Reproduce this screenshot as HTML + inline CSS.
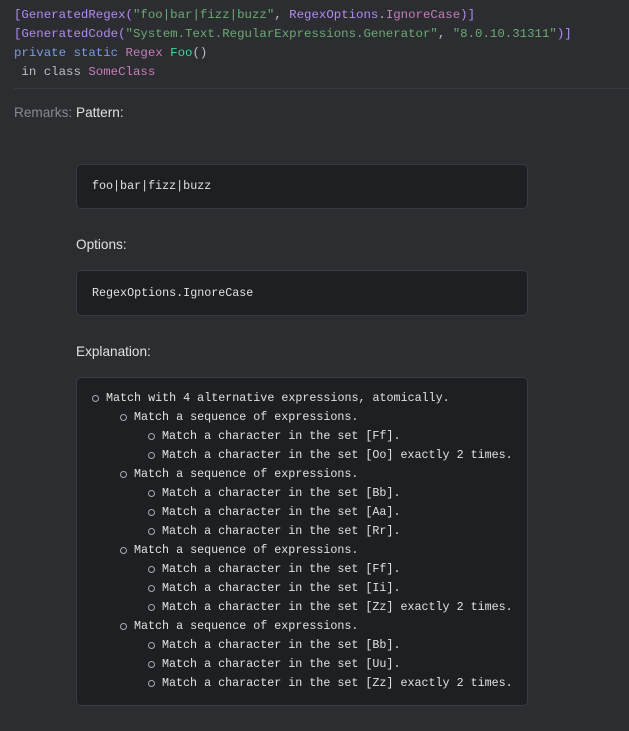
<!DOCTYPE html>
<html><head><style>
body{margin:0;background:#2b2d30;width:629px;height:731px;overflow:hidden;font-family:"Liberation Sans",sans-serif;color:#dfe1e5}
.code{position:absolute;left:14px;top:6px;font-family:"Liberation Mono",monospace;font-size:12.4px;line-height:19px;white-space:pre;color:#bcbec4}
.s{color:#6aab73}.k{color:#7a9be0}.c{color:#c77dbb}.g{color:#4ec9a0}.an{color:#b18cf2}
hr{position:absolute;left:14px;right:0;top:88px;margin:0;border:0;border-top:1px solid #393b40}
.lbl{position:absolute;font-size:13.6px;color:#dfe1e5}
.box{position:absolute;left:76px;width:450px;background:#1e1f22;border:1px solid #393b40;border-radius:5px;font-family:"Liberation Mono",monospace;font-size:11.7px;color:#dfe1e5;white-space:pre}
.ln{position:absolute;height:19px;line-height:19px}
.ln:before{content:"";position:absolute;left:-14px;top:6px;width:5px;height:5px;border:1px solid #a8aab0;border-radius:50%}
</style></head><body>
<div class="code"><span class="an">[GeneratedRegex(</span><span class="s">"foo|bar|fizz|buzz"</span>, <span class="an">RegexOptions</span>.<span class="c">IgnoreCase</span><span class="an">)]</span>
<span class="an">[GeneratedCode(</span><span class="s">"System.Text.RegularExpressions.Generator"</span>, <span class="s">"8.0.10.31311"</span><span class="an">)]</span>
<span class="k">private static</span> <span class="c">Regex</span> <span class="g">Foo</span>()
 in class <span class="c">SomeClass</span></div>
<hr>
<div class="lbl" style="left:14px;top:105px;color:#868a91">Remarks:</div>
<div class="lbl" style="left:76px;top:105px">Pattern:</div>
<div class="box" style="top:164px;height:43px"><div style="position:absolute;left:15px;top:14px">foo|bar|fizz|buzz</div></div>
<div class="lbl" style="left:76px;top:237px">Options:</div>
<div class="box" style="top:270px;height:44px"><div style="position:absolute;left:15px;top:15px">RegexOptions.IgnoreCase</div></div>
<div class="lbl" style="left:76px;top:344px">Explanation:</div>
<div class="box" style="top:377px;height:327px">
<div class="ln" style="left:29px;top:11px">Match with 4 alternative expressions, atomically.</div>
<div class="ln" style="left:57px;top:30px">Match a sequence of expressions.</div>
<div class="ln" style="left:85px;top:49px">Match a character in the set [Ff].</div>
<div class="ln" style="left:85px;top:68px">Match a character in the set [Oo] exactly 2 times.</div>
<div class="ln" style="left:57px;top:87px">Match a sequence of expressions.</div>
<div class="ln" style="left:85px;top:106px">Match a character in the set [Bb].</div>
<div class="ln" style="left:85px;top:125px">Match a character in the set [Aa].</div>
<div class="ln" style="left:85px;top:144px">Match a character in the set [Rr].</div>
<div class="ln" style="left:57px;top:163px">Match a sequence of expressions.</div>
<div class="ln" style="left:85px;top:182px">Match a character in the set [Ff].</div>
<div class="ln" style="left:85px;top:201px">Match a character in the set [Ii].</div>
<div class="ln" style="left:85px;top:220px">Match a character in the set [Zz] exactly 2 times.</div>
<div class="ln" style="left:57px;top:239px">Match a sequence of expressions.</div>
<div class="ln" style="left:85px;top:258px">Match a character in the set [Bb].</div>
<div class="ln" style="left:85px;top:277px">Match a character in the set [Uu].</div>
<div class="ln" style="left:85px;top:296px">Match a character in the set [Zz] exactly 2 times.</div>
</div>
</body></html>
